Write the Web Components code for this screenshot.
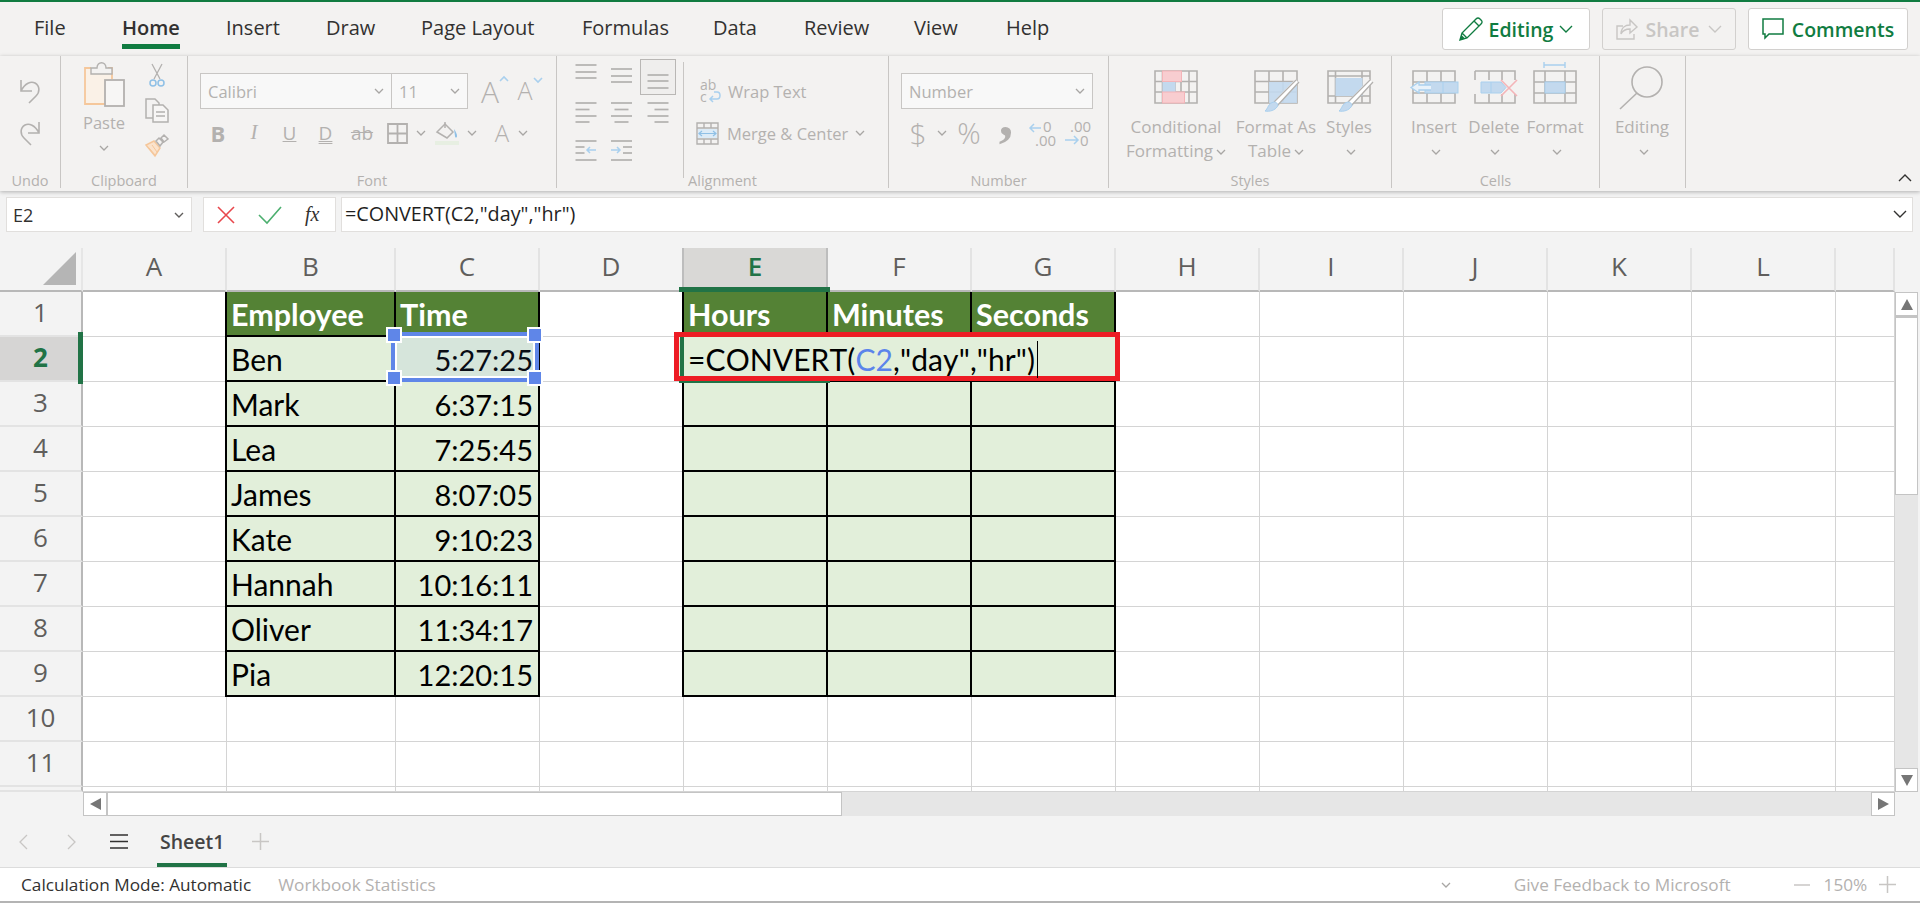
<!DOCTYPE html>
<html lang="en">
<head>
<meta charset="utf-8">
<title>Excel</title>
<style>
  html, body { margin: 0; height: 903px; overflow: hidden; background: #f3f3f3; }
  body { font-family: "Open Sans", "Noto Sans", sans-serif; color: #323130; }
</style>
</head>
<body>
<xl-app>
  <xl-tabs></xl-tabs>
  <xl-ribbon>
    <xl-group label="Undo" style="width:61px">
      <div style="display:flex;flex-direction:column;align-items:center;padding-top:23px;gap:18px">
        <xl-icon name="undo"></xl-icon>
        <xl-icon name="redo"></xl-icon>
      </div>
    </xl-group>

    <xl-group label="Clipboard" style="width:127px">
      <div style="display:flex;padding-left:22px">
        <div style="width:42px;display:flex;flex-direction:column;align-items:center;padding-top:6px">
          <xl-icon name="paste"></xl-icon>
          <span style="font-size:16.5px;line-height:22px;margin-top:5px;color:#b3b1af">Paste</span>
          <xl-icon name="chev" style="margin-top:11px"></xl-icon>
        </div>
        <div style="width:24px;margin-left:20px;display:flex;flex-direction:column;align-items:center;padding-top:7px;gap:11px">
          <xl-icon name="scissors"></xl-icon>
          <xl-icon name="copy"></xl-icon>
          <xl-icon name="painter"></xl-icon>
        </div>
      </div>
    </xl-group>

    <xl-group label="Font" style="width:369px">
      <div style="padding:17px 0 0 12px">
        <div style="display:flex;align-items:center;height:36px">
          <xl-combo style="width:192px" value="Calibri"></xl-combo>
          <xl-combo style="width:77px;margin-left:-1px" value="11"></xl-combo>
          <xl-glyph style="width:36px;margin-left:9px;font-size:30px;font-weight:300">A<xl-icon name="caretup"></xl-icon></xl-glyph>
          <xl-glyph style="width:34px;font-size:25px;font-weight:300">A<xl-icon name="caretdown"></xl-icon></xl-glyph>
        </div>
        <div style="display:flex;align-items:center;height:24px;margin-top:12px">
          <xl-glyph style="width:36px;font-size:22px;font-weight:700">B</xl-glyph>
          <xl-glyph style="width:36px;font-size:21px;font-style:italic;font-family:'Liberation Serif',serif">I</xl-glyph>
          <xl-glyph style="width:35px;font-size:19px;text-decoration:underline">U</xl-glyph>
          <xl-glyph style="width:37px;font-size:19px;text-decoration:underline double">D</xl-glyph>
          <xl-glyph style="width:36px;font-size:19px;text-decoration:line-through">ab</xl-glyph>
          <div style="width:34px;display:flex;justify-content:center"><xl-icon name="borders"></xl-icon></div>
          <div style="width:14px;display:flex;justify-content:center"><xl-icon name="chev"></xl-icon></div>
          <div style="width:38px;display:flex;justify-content:center"><xl-icon name="bucket"></xl-icon></div>
          <div style="width:12px;display:flex;justify-content:center"><xl-icon name="chev"></xl-icon></div>
          <xl-glyph style="width:30px;margin-left:9px;font-size:24px;font-weight:300">A</xl-glyph>
          <div style="width:12px;display:flex;justify-content:center"><xl-icon name="chev"></xl-icon></div>
        </div>
      </div>
    </xl-group>

    <xl-group label="Alignment" style="width:332px">
      <div style="display:flex;padding:3px 0 0 11px">
        <div style="display:grid;grid-template-columns:repeat(3,36px);grid-auto-rows:36px">
          <xl-icon name="alTop"></xl-icon><xl-icon name="alMid"></xl-icon><xl-icon name="alBot" style="background:#efeeed;outline:1px solid #b9b7b5;outline-offset:-1px"></xl-icon>
          <xl-icon name="alL"></xl-icon><xl-icon name="alC"></xl-icon><xl-icon name="alR"></xl-icon>
          <xl-icon name="inDec"></xl-icon><xl-icon name="inInc"></xl-icon>
        </div>
        <div style="margin:3px 0 0 7px;height:105px;border-left:1px solid #c8c6c4;padding:11px 0 0 12px;color:#b3b1af;font-size:16.5px">
          <div style="display:flex;align-items:center;height:36px;padding-left:4px;gap:6px"><xl-icon name="wrap"></xl-icon><span>Wrap Text</span></div>
          <div style="display:flex;align-items:center;height:36px;margin-top:6px;gap:8px"><xl-icon name="merge"></xl-icon><span>Merge &amp; Center</span><xl-icon name="chev" style="margin-left:-1px"></xl-icon></div>
        </div>
      </div>
    </xl-group>

    <xl-group label="Number" style="width:220px">
      <div style="padding:17px 0 0 12px">
        <xl-combo style="width:192px;height:36px" value="Number"></xl-combo>
        <div style="display:flex;align-items:center;height:30px;margin-top:9px">
          <xl-glyph style="width:34px;font-size:30px;font-weight:300">$</xl-glyph>
          <div style="width:14px;display:flex;justify-content:center"><xl-icon name="chev"></xl-icon></div>
          <xl-glyph style="width:40px;font-size:29px;font-weight:300">%</xl-glyph>
          <xl-glyph style="width:34px;height:30px;font-size:58px;line-height:30px;font-weight:700;font-family:'Liberation Serif',serif;transform:translateY(-17px)">,</xl-glyph>
          <div style="width:36px;display:flex;justify-content:center"><xl-icon name="decInc"></xl-icon></div>
          <div style="width:36px;display:flex;justify-content:center"><xl-icon name="decDec"></xl-icon></div>
        </div>
      </div>
    </xl-group>

    <xl-group label="Styles" style="width:283px">
      <div style="display:flex;padding-left:14px">
        <xl-cmd icon="cond" style="width:106px">Conditional<br>Formatting</xl-cmd>
        <xl-cmd icon="fat" style="width:94px">Format As<br>Table</xl-cmd>
        <xl-cmd icon="styles" style="width:52px">Styles<br></xl-cmd>
      </div>
    </xl-group>

    <xl-group label="Cells" style="width:208px">
      <div style="display:flex;padding-left:16px">
        <xl-cmd icon="insert" style="width:52px">Insert<br></xl-cmd>
        <xl-cmd icon="delete" style="width:68px">Delete<br></xl-cmd>
        <xl-cmd icon="format" style="width:54px">Format<br></xl-cmd>
      </div>
    </xl-group>

    <xl-group label="" style="width:86px">
      <xl-cmd icon="mag" style="width:84px">Editing<br></xl-cmd>
    </xl-group>
  </xl-ribbon>
  <xl-formula></xl-formula>
  <xl-sheet></xl-sheet>
  <xl-tabstrip></xl-tabstrip>
  <xl-status></xl-status>
</xl-app>

<script>
// colores compartidos de los iconos deshabilitados
const G = '#b3b1af', BL = '#a9d0ee', BF = '#c3d9ee', RD = '#f4b4b8', RF = '#f8cdd0', OR = '#f5c79b';

// rejilla de lineas para los iconos grandes de la cinta
const gridLines = (x, y, w, h, vs, hs) => {
  let d = `M${x} ${y}h${w}v${h}h${-w}z`;
  vs.forEach(v => d += `M${x + v} ${y}v${h}`);
  hs.forEach(v => d += `M${x} ${y + v}h${w}`);
  return `<path d="${d}" fill="none" stroke="${G}" stroke-width="1.6"/>`;
};
const brush = (x, y) => `<path d="M${x + 31} ${y}L${x + 9} ${y + 23}" stroke="#fff" stroke-width="5"/><path d="M${x + 30} ${y - 1}L${x + 8} ${y + 21}M${x + 33} ${y + 1}L${x + 11} ${y + 25}" stroke="${G}" stroke-width="1.3"/><path d="M${x + 8} ${y + 21}c3 0 5 3 3 5c-2 3-7 5-12 4c3-2 3-8 9-9z" fill="${BF}" stroke="${BL}"/>`;
const lines = arr => arr.map(([x, y, w]) => `<path d="M${x} ${y}h${w}" stroke="${G}" stroke-width="1.7"/>`).join('');

const ICONS = {
  chev: [10, 6, `<path d="M1 1l4 4 4-4" fill="none" stroke="#a8a6a4" stroke-width="1.3"/>`],
  undo: [22, 24, `<path d="M2 1v11h11M2 12C6 4 12 2 16 4c5 3 5 9 1 13l-7 7" fill="none" stroke="${G}" stroke-width="1.6"/>`],
  redo: [22, 24, `<path d="M20 1v11H9M20 12C16 4 10 2 6 4C1 7 1 13 5 17l7 7" fill="none" stroke="${G}" stroke-width="1.6"/>`],
  paste: [41, 45, `<path d="M1 7h6v-1h17v1h4v11H21v24H1z" fill="#faf1e7"/><path d="M7 6H1v36h20M24 6h4v11" fill="none" stroke="${OR}" stroke-width="1.8"/><path d="M7 12V6h6c0-7 9-7 9 0h6v6z" fill="#f3f2f1" stroke="${G}" stroke-width="1.4"/><rect x="21" y="18" width="19" height="26" fill="#f7f6f5" stroke="${G}" stroke-width="1.8"/>`],
  scissors: [16, 24, `<path d="M3 1l8 15M13 1L5 16" stroke="${G}" stroke-width="1.3" fill="none"/><circle cx="4" cy="20" r="3" fill="none" stroke="#8fc0e6" stroke-width="1.5"/><circle cx="12" cy="20" r="3" fill="none" stroke="#8fc0e6" stroke-width="1.5"/>`],
  copy: [24, 25, `<path d="M8 20H1V1h9l4 4v2" fill="none" stroke="${G}" stroke-width="1.5"/><path d="M8 7h10l5 5v12H8zM11 14h9M11 18h9" fill="#f7f6f5" stroke="${G}" stroke-width="1.5"/>`],
  painter: [24, 23, `<path d="M1 11l9 11 5-8-6-7z" fill="#fbe3cc" stroke="${OR}" stroke-width="1.5"/><path d="M4 14l6 7M7 11l5 7" stroke="${OR}"/><path d="M11 7l3-3 4 4-3 4zM16 4l3-3 4 4-4 3z" fill="#f3f2f1" stroke="${G}" stroke-width="1.5"/>`],
  caretup: [10, 7, `<path d="M1 6l4-4 4 4" fill="none" stroke="${BL}" stroke-width="1.6"/>`],
  caretdown: [10, 7, `<path d="M1 1l4 4 4-4" fill="none" stroke="${BL}" stroke-width="1.6"/>`],
  borders: [21, 21, `<path d="M1 1h19v19H1zM10.500 1v19M1 10.500h19" fill="none" stroke="${G}" stroke-width="1.8"/>`],
  bucket: [24, 24, `<path d="M2 11l8-8 8 8-6 6z" fill="#f3f2f1" stroke="${G}" stroke-width="1.5"/><path d="M10 1v6" stroke="${G}" stroke-width="1.5"/><path d="M19 8c2 3 3 5 3 7s-2 2-2 0z" fill="#8fc0e6"/><rect y="20" width="24" height="4" fill="#e7efe2"/>`],
  alTop: [36, 36, lines([[7.500, 6, 21], [7.500, 13, 21], [7.500, 19, 21]])],
  alMid: [36, 36, lines([[7, 10, 21], [7, 17, 21], [7, 23, 21]])],
  alBot: [36, 36, lines([[7.500, 16, 21], [7.500, 22, 21], [7.500, 29, 21]])],
  alL: [36, 36, lines([[7.500, 8, 21], [7.500, 14.500, 14], [7.500, 21, 21], [7.500, 27, 14]])],
  alC: [36, 36, lines([[7, 8, 21], [10.500, 14.500, 14], [7, 21, 21], [10.500, 27, 14]])],
  alR: [36, 36, lines([[7.500, 8, 21], [14.500, 14.500, 14], [7.500, 21, 21], [14.500, 27, 14]])],
  inDec: [36, 36, lines([[7.500, 10, 21], [7.500, 16, 9], [7.500, 22, 9], [7.500, 29, 21]]) + `<path d="M28 19h-9m3-3l-3 3 3 3" fill="none" stroke="${BL}" stroke-width="1.5"/>`],
  inInc: [36, 36, lines([[7, 10, 21], [19, 16, 9], [19, 22, 9], [7, 29, 21]]) + `<path d="M7 19h9m-3-3l3 3-3 3" fill="none" stroke="${BL}" stroke-width="1.5"/>`],
  wrap: [22, 24, `<text x="0" y="11" font-size="14" fill="${G}">ab</text><text x="0" y="23" font-size="14" fill="${G}">c</text><path d="M10 20h7c4 0 4-7 0-7h-3M13 17l-3 3 3 3" fill="none" stroke="${BL}" stroke-width="1.5"/>`],
  merge: [23, 23, `<path d="M1 1h21v21H1zM1 6h21M1 17h21M8 17v5M15 17v5M8 1v5M15 1v5" fill="#f3f2f1" stroke="${G}" stroke-width="1.4"/><rect x="2" y="7" width="19" height="9" fill="#dcebf7"/><path d="M3 11.500h17M6 9l-3 2.500L6 14M17 9l3 2.500L17 14" fill="none" stroke="#8fc0e6" stroke-width="1.2"/>`],
  decInc: [26, 27, `<text x="15" y="12" font-size="15" fill="${G}">0</text><text x="7" y="26" font-size="15" fill="${G}">.00</text><path d="M13 8H2m4-4L2 8l4 4" fill="none" stroke="${BL}" stroke-width="1.5"/>`],
  decDec: [26, 27, `<text x="6" y="12" font-size="15" fill="${G}">.00</text><text x="16" y="26" font-size="15" fill="${G}">0</text><path d="M1 20h13m-4-4l4 4-4 4" fill="none" stroke="${BL}" stroke-width="1.5"/>`],
  cond: [50, 54, gridLines(4, 15, 42, 32, [7.500, 20, 26, 34], [10.500, 21]) + `<rect x="11.500" y="15" width="19" height="10.500" fill="${RF}" stroke="${RD}"/><rect x="11.500" y="26" width="13" height="10" fill="${BF}"/><rect x="11.500" y="36" width="22" height="11" fill="${RF}" stroke="${RD}"/>`],
  fat: [50, 54, gridLines(4, 15, 42, 32, [14, 28], [10.500, 21]) + `<rect x="18" y="26" width="28" height="21" fill="${BF}" opacity=".9"/>` + brush(15, 25)],
  styles: [50, 54, gridLines(4, 15, 42, 32, [7.500, 34], [5, 25]) + `<rect x="11.500" y="22" width="27" height="18" fill="${BF}"/>` + brush(16, 25)],
  insert: [50, 54, gridLines(4, 15, 42, 32, [14, 28], [11, 22]) + `<rect x="16" y="26" width="33" height="11" fill="${BF}" stroke="${BL}"/><path d="M34 26v11" stroke="${BL}"/><path d="M22 29h-12v-3l-8 5.500 8 5.500v-3h12" fill="#e9f2fa" stroke="${BL}" stroke-width="1.3"/>`],
  delete: [50, 54, `<path d="M6 15h40v9M46 38v9H6v-9M6 15v9M20 15v9M33 15v9M20 38v9M33 38v9" fill="none" stroke="${G}" stroke-width="1.6"/><path d="M12 26h20l5 5.500-5 5.500H12z" fill="${BF}" stroke="${BL}"/><path d="M22 26v11" stroke="${BL}"/><path d="M32 24l16 16M48 24L32 40" stroke="${RD}" stroke-width="1.6"/>`],
  format: [50, 54, gridLines(4, 15, 42, 32, [11, 31], [11, 22]) + `<rect x="15" y="26" width="20" height="11" fill="${BF}" stroke="${BL}"/><path d="M14 9h21M14 6v6M35 6v6" stroke="${BL}" stroke-width="1.4"/>`],
  mag: [50, 54, `<circle cx="30" cy="26" r="15" fill="none" stroke="${G}" stroke-width="1.6"/><path d="M20 37L3 53" stroke="${G}" stroke-width="1.6"/>`],
  pencil: [24, 24, `<path d="M1 23l2-7L17 2c2-2 3-1 4 0l1 1c1 1 2 2 0 4L8 21zM3 16l5 5M15 4l5 5" fill="none" stroke="#107c41" stroke-width="1.4"/><path d="M1 23l1.500-5 3.500 3.500z" fill="#107c41"/>`],
  share: [21, 22, `<path d="M7 8H1v13h17v-5" fill="none" stroke="#c8c6c4" stroke-width="1.4"/><path d="M5 16c0-6 4-9 9-9V2l7 7-7 6v-4c-4 0-7 1-9 5z" fill="none" stroke="#c8c6c4" stroke-width="1.4"/>`],
  bubble: [22, 22, `<path d="M1 1h20v15H7l-4 4v-4H1z" fill="none" stroke="#107c41" stroke-width="1.5"/>`],
  chevGreen: [14, 8, `<path d="M1 1l6 6 6-6" fill="none" stroke="#107c41" stroke-width="1.4"/>`],
  chevLight: [14, 8, `<path d="M1 1l6 6 6-6" fill="none" stroke="#c8c6c4" stroke-width="1.4"/>`],
  chevDark: [14, 8, `<path d="M1 1l6 6 6-6" fill="none" stroke="#323130" stroke-width="1.4"/>`],
  chevUp: [14, 8, `<path d="M1 7l6-6 6 6" fill="none" stroke="#323130" stroke-width="1.4"/>`],
  chevName: [10, 6, `<path d="M1 1l4 4 4-4" fill="none" stroke="#605e5c" stroke-width="1.4"/>`],
  cross: [20, 20, `<path d="M2 2l16 16M18 2L2 18" stroke="#e8474c" stroke-width="1.6"/>`],
  check: [24, 18, `<path d="M1 9l8 8L23 1" fill="none" stroke="#4caf6f" stroke-width="1.6"/>`],
  prev: [9, 16, `<path d="M8 1L1 8l7 7" fill="none" stroke="#c8c6c4" stroke-width="1.3"/>`],
  next: [9, 16, `<path d="M1 1l7 7-7 7" fill="none" stroke="#c8c6c4" stroke-width="1.3"/>`],
  menu: [18, 15, `<path d="M0 1h18M0 7.500h18M0 14h18" stroke="#323130" stroke-width="1.4"/>`],
  plus: [17, 17, `<path d="M8.500 0v17M0 8.500h17" stroke="#c8c6c4" stroke-width="1.5"/>`],
  minus: [16, 2, `<path d="M0 1h16" stroke="#c8c6c4" stroke-width="1.5"/>`],
  triU: [12, 11, `<path d="M6 0l6 11H0z" fill="#767676"/>`],
  triD: [12, 11, `<path d="M6 11l6-11H0z" fill="#767676"/>`],
  triL: [11, 12, `<path d="M0 6l11-6v12z" fill="#767676"/>`],
  triR: [11, 12, `<path d="M11 6L0 0v12z" fill="#767676"/>`],
};
const svg = name => {
  const [w, h, body] = ICONS[name];
  return `<svg width="${w}" height="${h}" viewBox="0 0 ${w} ${h}" style="display:block;overflow:visible;font-family:'Open Sans',sans-serif">${body}</svg>`;
};

// clase base: pinta estilos + marcado en el shadow root
class XlBase extends HTMLElement {
  constructor() {
    super();
    this.attachShadow({ mode: 'open' });
  }
  connectedCallback() {
    this.shadowRoot.innerHTML = `<style>${this.constructor.css}</style>${this.render()}`;
  }
}

class XlApp extends XlBase {
  static css = `
    :host { display: flex; flex-direction: column; height: 903px; border-top: 2px solid #107c41; box-sizing: border-box; }
  `;
  render() { return `<slot></slot>`; }
}

class XlIcon extends XlBase {
  static css = `:host { display: block; flex: none; }`;
  render() { return svg(this.getAttribute('name')); }
}

class XlGlyph extends XlBase {
  static css = `
    :host { display: flex; justify-content: center; align-items: flex-start; color: #b3b1af; line-height: 1.1; flex: none; }
  `;
  render() { return `<slot></slot>`; }
}

class XlCombo extends XlBase {
  static css = `
    :host { display: flex; align-items: center; justify-content: space-between; box-sizing: border-box; height: 36px; padding: 0 7px;
      background: #f8f8f8; border: 1px solid #c8c6c4; color: #b3b1af; font-size: 16.5px; flex: none; }
  `;
  render() { return `<span>${this.getAttribute('value')}</span>${svg('chev')}`; }
}

class XlTabs extends XlBase {
  static css = `
    :host { display: flex; height: 54px; background: #f3f2f1; padding-left: 34px; font-size: 20px; color: #323130; box-sizing: border-box; flex: none; }
    .tab { height: 47px; box-sizing: border-box; padding-top: 8px; flex: none; }
    .tab span { display: inline-flex; align-items: center; height: 39px; box-sizing: border-box; border-bottom: 5px solid transparent; }
    .on span { border-color: #107c41; font-weight: 600; }
    .right { margin-left: auto; display: flex; gap: 12px; padding: 6px 12px 0 0; }
    .btn { display: flex; align-items: center; justify-content: center; box-sizing: border-box; height: 42px; border: 1px solid #d2d0ce; border-radius: 3px;
      background: #fff; color: #107c41; font-weight: 600; font-size: 19.500px; gap: 8px; }
    .off { background: #f3f2f1; color: #c8c6c4; }
  `;
  render() {
    const tabs = [['File', 88], ['Home', 104], ['Insert', 100], ['Draw', 95], ['Page Layout', 161],
      ['Formulas', 131], ['Data', 91], ['Review', 110], ['View', 92], ['Help', 60]];
    return tabs.map(([t, w]) => `<div class="tab ${t === 'Home' ? 'on' : ''}" style="width:${w}px"><span>${t}</span></div>`).join('') + `
      <div class="right">
        <div class="btn" style="width:148px;gap:6px">${svg('pencil')}<span>Editing</span>${svg('chevGreen')}</div>
        <div class="btn off" style="width:134px">${svg('share')}<span>Share</span>${svg('chevLight')}</div>
        <div class="btn" style="width:160px">${svg('bubble')}<span>Comments</span></div>
      </div>`;
  }
}

class XlRibbon extends XlBase {
  static css = `
    :host { display: flex; position: relative; height: 135px; background: #f3f2f1; box-shadow: 0 1px 4px rgba(0,0,0,.28); flex: none; z-index: 2; }
    .collapse { position: absolute; right: 8px; top: 118px; }
  `;
  render() { return `<slot></slot><div class="collapse">${svg('chevUp')}</div>`; }
}

class XlGroup extends XlBase {
  static css = `
    :host { display: flex; flex-direction: column; height: 132px; box-sizing: border-box; border-right: 1px solid #c8c6c4; flex: none; }
    .body { height: 113px; }
    .label { height: 19px; line-height: 24px; text-align: center; font-size: 14.500px; color: #b3b1af; }
  `;
  render() {
    return `<div class="body"><slot></slot></div><div class="label">${this.getAttribute('label')}</div>`;
  }
}

class XlCmd extends XlBase {
  static css = `
    :host { display: flex; flex-direction: column; align-items: center; flex: none; color: #b3b1af; font-size: 17px; }
    .txt { margin-top: 5px; line-height: 24px; text-align: center; white-space: nowrap; }
    svg.c { display: inline-block; margin-left: 3px; vertical-align: 2px; }
  `;
  render() {
    return `${svg(this.getAttribute('icon'))}<div class="txt"><slot></slot><svg class="c" width="10" height="6" viewBox="0 0 10 6"><path d="M1 1l4 4 4-4" fill="none" stroke="#a8a6a4" stroke-width="1.3"/></svg></div>`;
  }
}

class XlFormula extends XlBase {
  static css = `
    :host { display: flex; height: 57px; padding: 6px 7px 0 6px; box-sizing: border-box; background: #f3f3f3; font-size: 19.800px; flex: none; }
    .box { height: 35px; box-sizing: border-box; background: #fff; border: 1px solid #e1dfdd; display: flex; align-items: center; flex: none; }
    .name { width: 186px; padding: 0 7px 0 6px; justify-content: space-between; font-size: 18px; }
    .btns { width: 133px; margin-left: 11px; padding-left: 12px; }
    .fx { font: italic 20px "Liberation Serif", serif; margin-left: 23px; color: #323130; }
    .input { flex: 1; margin-left: 5px; padding: 0 5px 2px 3px; justify-content: space-between; color: #1f1f1f; }
  `;
  render() {
    return `
      <div class="box name"><span>E2</span>${svg('chevName')}</div>
      <div class="box btns">${svg('cross')}<div style="width:22px"></div>${svg('check')}<span class="fx">fx</span></div>
      <div class="box input"><span>=CONVERT(C2,"day","hr")</span>${svg('chevDark')}</div>`;
  }
}

class XlSheet extends XlBase {
  static css = `
    :host { display: block; flex: none; height: 568px; background: #f3f3f3; }
    .main { display: flex; height: 544px; }
    .grid { position: relative; display: grid; width: 1895px; height: 544px; overflow: hidden; flex: none; background: #fff;
      grid-template-columns: 83px 144px 169px 144px repeat(8, 144px) 144px 59px;
      grid-template-rows: 44px repeat(11, 45px) 5px; font-family: Lato, "Liberation Sans", sans-serif; }
    .grid > div { box-sizing: border-box; }
    .corner { background: #f3f3f3; border-bottom: 2px solid #b8b8b8; border-right: 2px solid #e6e6e6; padding: 4px 0 0 43px; }
    .ch { background: #f3f3f3; border-bottom: 2px solid #b8b8b8; border-right: 2px solid #e3e3e3; padding-bottom: 6px;
      display: flex; align-items: center; justify-content: center; font: 26px/36px "Open Sans", sans-serif; color: #605e5c; }
    .ch.sel { background: #d9d8d6; color: #217346; font-weight: 600; border-right-color: #bdbdbd; box-shadow: -2px 0 #bdbdbd; }
    .rh { background: #f3f3f3; border-right: 2px solid #b8b8b8; border-bottom: 2px solid #e3e3e3; padding-bottom: 3px;
      display: flex; align-items: center; justify-content: center; font: 26px/40px "Open Sans", sans-serif; color: #605e5c; }
    .rh.sel { background: #d6d5d4; color: #217346; font-weight: 700; }
    .c { border-right: 1px solid #d4d4d4; border-bottom: 1px solid #d4d4d4; font-size: 30px; line-height: 45px; padding: 0 4px; white-space: nowrap; color: #000; }
    .t { background: #e2efda; border-right: 2px solid #000; border-bottom: 2px solid #000; }
    .l { box-shadow: -2px 0 #000; }
    .h { background: #548235; color: #fff; font-weight: 700; font-size: 30.500px; }
    .r { text-align: right; padding-right: 5px; font-size: 29px; }

    /* capas sobre la hoja: rango C2, celda en edicion y recuadro rojo */
    .range { position: absolute; left: 391px; top: 84px; width: 148px; height: 50px; box-sizing: border-box; }
    .range .fill { position: absolute; inset: 0; border: 4px solid #5f86e8; background: rgba(95,134,232,.09); box-shadow: inset 0 0 0 2px #fff; }
    .hd { position: absolute; width: 12px; height: 12px; background: #5f86e8; border: 2px solid #fff; }
    .green { position: absolute; background: #217346; }
    .edit { position: absolute; left: 674px; top: 84px; width: 446px; height: 49px; box-sizing: border-box; background: #e2efda;
      border: 5px solid #ed1c24; font-size: 30px; line-height: 45px; padding-left: 9px; white-space: nowrap; color: #000; font-kerning: none; letter-spacing: .1px; }
    .edit b { font-weight: 400; color: #5b84eb; }
    .edit i { display: inline-block; width: 1px; height: 37px; background: #000; vertical-align: -7px; margin-left: 2px; }
    .edit::before { content: ""; position: absolute; left: 1px; top: 0; bottom: 0; width: 4px; background: #217346; }

    .vs { width: 25px; flex: none; padding-top: 44px; box-sizing: border-box; }
    .vs .track { width: 23px; height: 500px; background: #e6e6e6; display: flex; flex-direction: column; }
    .sb { box-sizing: border-box; background: #fff; border: 1px solid #c4c4c4; display: flex; align-items: center; justify-content: center; flex: none; }
    .hs { display: flex; height: 24px; padding-left: 83px; width: 1895px; box-sizing: border-box; }
    .hs .track { flex: 1; background: #e6e6e6; display: flex; }
  `;
  render() {
    const heads = ['A', 'B', 'C', 'D', 'E', 'F', 'G', 'H', 'I', 'J', 'K', 'L', ''];
    const left = { 1: 'Employee', 2: 'Ben', 3: 'Mark', 4: 'Lea', 5: 'James', 6: 'Kate', 7: 'Hannah', 8: 'Oliver', 9: 'Pia' };
    const time = { 1: 'Time', 2: '5:27:25', 3: '6:37:15', 4: '7:25:45', 5: '8:07:05', 6: '9:10:23', 7: '10:16:11', 8: '11:34:17', 9: '12:20:15' };
    const right = { E: 'Hours', F: 'Minutes', G: 'Seconds' };
    let html = `<div class="corner"><svg width="33" height="33" viewBox="0 0 33 33" style="display:block"><path d="M33 0v33H0z" fill="#b5b5b5"/></svg></div>`;
    heads.forEach(h => html += `<div class="ch ${h === 'E' ? 'sel' : ''}">${h}</div>`);
    for (let r = 1; r <= 12; r++) {
      html += `<div class="rh ${r === 2 ? 'sel' : ''}">${r <= 11 ? r : ''}</div>`;
      heads.forEach(col => {
        let cls = 'c', txt = '';
        if (r <= 9 && (col === 'B' || col === 'C')) {
          cls += ' t' + (col === 'B' ? ' l' : '');
          if (r === 1) cls += ' h';
          txt = col === 'B' ? left[r] : time[r];
          if (col === 'C' && r > 1) cls += ' r';
        }
        if (r <= 9 && 'EFG'.includes(col) && col) {
          cls += ' t' + (col === 'E' ? ' l' : '');
          if (r === 1) { cls += ' h'; txt = right[col]; }
        }
        html += `<div class="${cls}">${txt}</div>`;
      });
    }
    const handles = [[-5, -5], [136, -5], [-5, 38], [136, 38]]
      .map(([x, y]) => `<div class="hd" style="left:${x}px;top:${y}px"></div>`).join('');
    return `
      <div class="main">
        <div class="grid">
          ${html}
          <div class="green" style="left:679px;top:39px;width:151px;height:5px"></div>
          <div class="green" style="left:78px;top:84px;width:5px;height:52px"></div>
          <div class="green" style="left:679px;top:133px;width:151px;height:2px"></div>
          <div class="range"><div class="fill"></div>${handles}</div>
          <div class="edit">=CONVERT(<b>C2</b>,"day","hr")<i></i></div>
        </div>
        <div class="vs">
          <div class="track">
            <div class="sb" style="height:24px;width:23px">${svg('triU')}</div>
            <div class="sb" style="height:179px;width:23px;border-top-width:2px"></div>
            <div style="flex:1"></div>
            <div class="sb" style="height:24px;width:23px">${svg('triD')}</div>
          </div>
        </div>
      </div>
      <div class="hs">
        <div class="track">
          <div class="sb" style="width:24px">${svg('triL')}</div>
          <div class="sb" style="width:735px"></div>
          <div style="flex:1"></div>
          <div class="sb" style="width:24px">${svg('triR')}</div>
        </div>
      </div>`;
  }
}

class XlTabstrip extends XlBase {
  static css = `
    :host { display: flex; align-items: center; height: 52px; box-sizing: border-box; background: #f3f3f3; border-bottom: 1px solid #dcdcdc; padding-left: 19px; flex: none; }
    .sheet { display: flex; align-items: center; height: 51px; box-sizing: border-box; padding: 3px 3px 0; margin-left: 29px; font-size: 19.500px; font-weight: 600; color: #444; border-bottom: 4px solid #217346; }
  `;
  render() {
    return `${svg('prev')}<div style="width:39px"></div>${svg('next')}<div style="width:34px"></div>${svg('menu')}
      <div class="sheet">Sheet1</div><div style="width:25px"></div>${svg('plus')}`;
  }
}

class XlStatus extends XlBase {
  static css = `
    :host { display: flex; align-items: center; height: 33px; box-sizing: content-box; background: #fff; border-bottom: 2px solid #b4b4b4; padding-left: 21px; font-size: 17.200px; color: #323130; flex: none; white-space: nowrap; }
    .off { color: #b3b1af; }
  `;
  render() {
    return `<span>Calculation Mode: Automatic</span><span class="off" style="margin-left:27px">Workbook Statistics</span>
      <span style="margin-left:1005px">${svg('chev')}</span>
      <span class="off" style="margin-left:63px">Give Feedback to Microsoft</span>
      <span style="margin-left:63px">${svg('minus')}</span>
      <span class="off" style="margin-left:14px">150%</span>
      <span style="margin-left:12px">${svg('plus')}</span>`;
  }
}

customElements.define('xl-app', XlApp);
customElements.define('xl-icon', XlIcon);
customElements.define('xl-glyph', XlGlyph);
customElements.define('xl-combo', XlCombo);
customElements.define('xl-tabs', XlTabs);
customElements.define('xl-ribbon', XlRibbon);
customElements.define('xl-group', XlGroup);
customElements.define('xl-cmd', XlCmd);
customElements.define('xl-formula', XlFormula);
customElements.define('xl-sheet', XlSheet);
customElements.define('xl-tabstrip', XlTabstrip);
customElements.define('xl-status', XlStatus);
</script>
</body>
</html>
